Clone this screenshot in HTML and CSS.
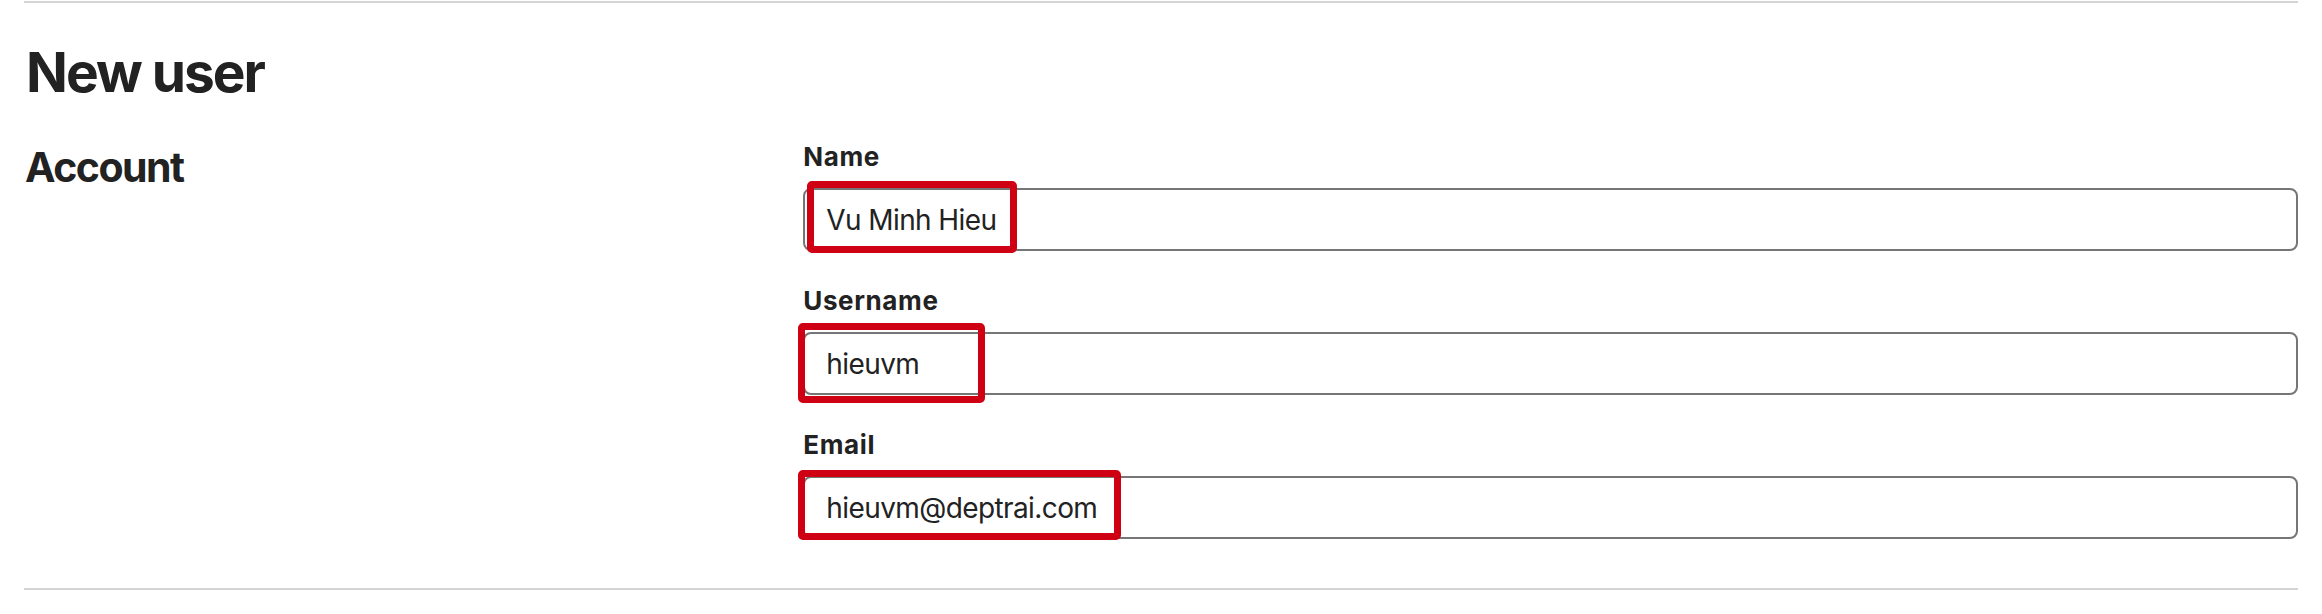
FILE: index.html
```html
<!DOCTYPE html>
<html lang="en">
<head>
<meta charset="utf-8">
<title>New user</title>
<link rel="stylesheet" href="styles.css">
</head>
<body>
<div class="page">
  <div class="rule rule-top"></div>
  <h1 class="title">New user</h1>
  <form class="section">
    <h2 class="section-title">Account</h2>
    <div class="fields">
      <div class="field">
        <label class="label" for="name">Name</label>
        <div class="control">
          <input class="input" id="name" type="text" value="Vu Minh Hieu">
          <span class="highlight hl-name"></span>
        </div>
      </div>
      <div class="field">
        <label class="label" for="username">Username</label>
        <div class="control">
          <input class="input" id="username" type="text" value="hieuvm">
          <span class="highlight hl-username"></span>
        </div>
      </div>
      <div class="field">
        <label class="label" for="email">Email</label>
        <div class="control">
          <input class="input" id="email" type="email" value="hieuvm@deptrai.com">
          <span class="highlight hl-email"></span>
        </div>
      </div>
    </div>
  </form>
  <div class="rule rule-bottom"></div>
</div>
</body>
</html>
```

FILE: styles.css
```css
html, body {
  margin: 0;
  padding: 0;
  background: #ffffff;
}

body {
  font-family: Inter, "Noto Sans", "Liberation Sans", sans-serif;
  color: #222222;
}

.page {
  padding: 0 24px;
}

.rule {
  height: 2px;
  background: #d4d4d4;
}

.rule-top {
  margin-top: 1px;
}

.title {
  margin: 36px 0 0 0;
  font-size: 55px;
  line-height: 66px;
  font-weight: 700;
  letter-spacing: -2px;
  padding-left: 2px;
}

.section {
  display: grid;
  grid-template-columns: 1fr 2fr;
  column-gap: 32px;
  margin-top: 37px;
}

.section-title {
  margin: 0;
  font-size: 41px;
  line-height: 50px;
  font-weight: 700;
  letter-spacing: -1.5px;
  padding-left: 1px;
}

.fields {
  display: flex;
  flex-direction: column;
  gap: 35px;
}

.field {
  display: flex;
  flex-direction: column;
  gap: 16px;
}

.label {
  font-size: 26px;
  line-height: 30px;
  font-weight: 700;
  letter-spacing: 0.6px;
}

.control {
  position: relative;
}

.input {
  display: block;
  box-sizing: border-box;
  width: 100%;
  height: 63px;
  margin: 0;
  padding: 0 21px;
  border: 2px solid #767676;
  border-radius: 8px;
  background: #ffffff;
  font-family: Inter, "Noto Sans", "Liberation Sans", sans-serif;
  font-size: 28px;
  letter-spacing: -0.6px;
  color: #222222;
  outline: none;
}

.highlight {
  position: absolute;
  box-sizing: border-box;
  border: 7px solid #cf0014;
  border-radius: 5px;
  pointer-events: none;
}

.hl-name {
  left: 4px;
  top: -7px;
  width: 210px;
  height: 72px;
}

.hl-username {
  left: -5px;
  top: -9px;
  width: 187px;
  height: 80px;
}

.hl-email {
  left: -5px;
  top: -6px;
  width: 323px;
  height: 70px;
}

.rule-bottom {
  margin-top: 49px;
}
```
